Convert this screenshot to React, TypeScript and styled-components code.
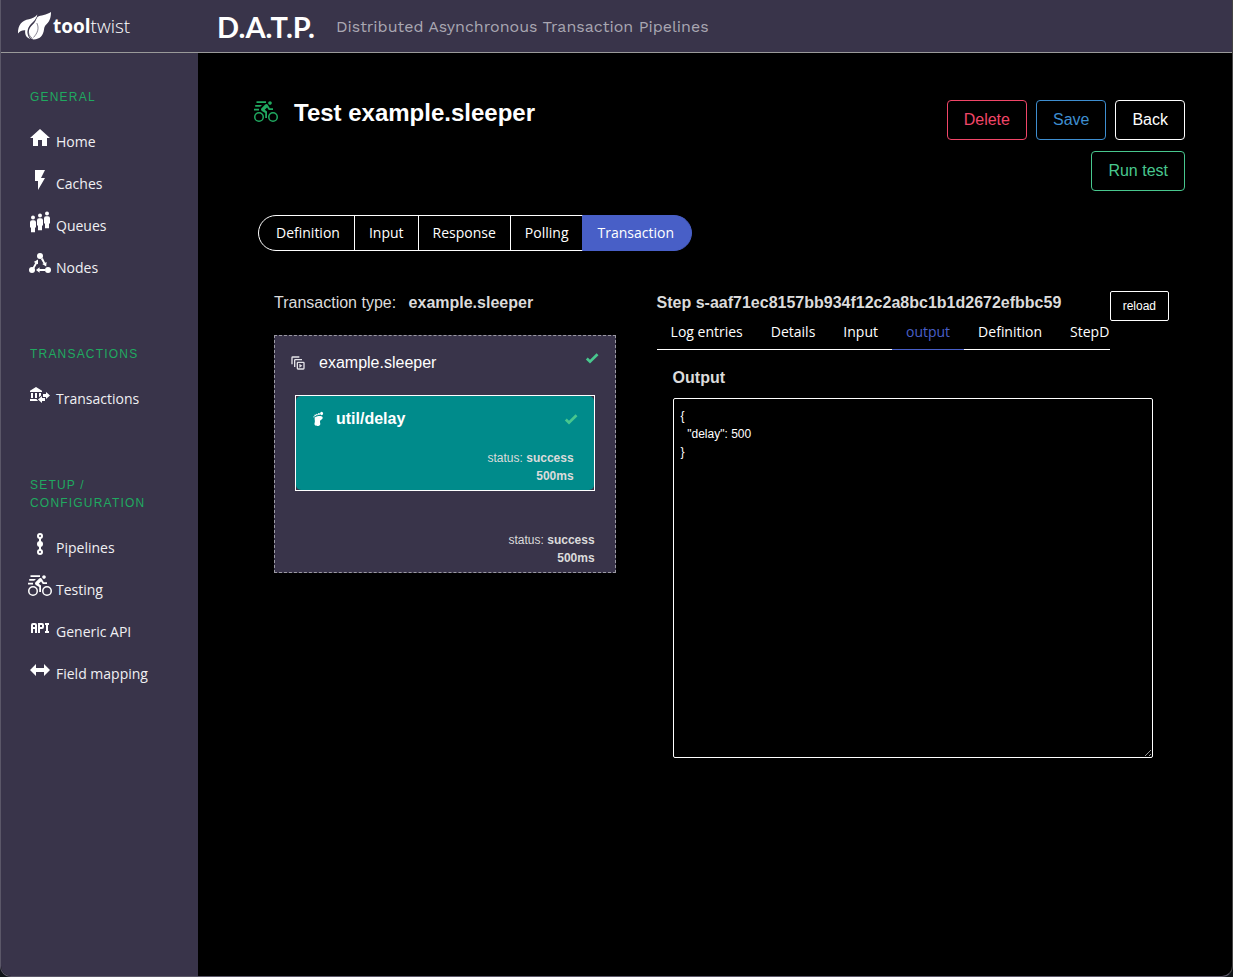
import React from "react";
import styled, { createGlobalStyle, css } from "styled-components";

const sans = `"Liberation Sans", Arial, sans-serif`;
const open = `"Open Sans", "Noto Sans", sans-serif`;
const plum = "#39344a";

const GlobalStyle = createGlobalStyle`
  *, *::before, *::after { box-sizing: border-box; }
  body { margin: 0; background: #101418; color: #dbdbdb; font: 16px/24px ${sans}; }
  h1, h2, h3, p, ul { margin: 0; padding: 0; }
  ul { list-style: none; }
  a { color: inherit; text-decoration: none; }
  button { font-family: inherit; cursor: pointer; }
`;

const Shell = styled.div`
  display: flex;
  flex-direction: column;
  min-height: 100vh;
  overflow: hidden;
  background: #000;
  border: 1px solid #5b5768;
  border-top: 0;
  border-right-color: #444;
  border-radius: 0 0 11px 11px;
`;

const Header = styled.header`
  display: flex;
  align-items: center;
  height: 53px;
  background: ${plum};
  border-bottom: 1px solid #9a9a9a;
`;

const Brand = styled.a`
  display: flex;
  align-items: center;
  gap: 1px;
  flex: 0 0 216px;
  padding-left: 16px;
  color: #fff;
  font: 300 19px/24px ${open};
  b { font-weight: 700; }
`;

const Naming = styled.div`
  display: flex;
  align-items: center;
  gap: 21px;
  padding-top: 2px;
`;

const Product = styled.h1`
  color: #fff;
  font: 700 29px/40px Lato, sans-serif;
`;

const Tagline = styled.p`
  color: #a9a7b2;
  font: 400 16px/24px "Work Sans", ${open};
`;

const Body = styled.div`
  display: flex;
  flex: 1;
`;

const Sidebar = styled.nav`
  display: flex;
  flex-direction: column;
  gap: 56px;
  flex: 0 0 197px;
  padding: 35px 29px;
  background: ${plum};
`;

const GroupTitle = styled.h2`
  margin-bottom: 15px;
  color: #20a960;
  font: 400 12px/18px ${sans};
  letter-spacing: 0.1em;
  text-transform: uppercase;
`;

const NavLink = styled.a`
  display: flex;
  align-items: center;
  gap: 4px;
  height: 42px;
  margin-left: -2px;
  color: #f0f0f3;
  font: 14px/42px ${open};
  white-space: nowrap;
  svg { flex: none; box-sizing: content-box; padding-bottom: 8px; color: #fff; }
`;

const Main = styled.main`
  flex: 1;
  min-width: 0;
  padding: 47px 47px 48px 56px;
`;

const TitleRow = styled.div`
  display: flex;
  justify-content: space-between;
  align-items: flex-start;
`;

const Title = styled.h2`
  display: flex;
  align-items: center;
  gap: 16px;
  color: #fff;
  font: 700 24px/26px ${sans};
  svg { box-sizing: content-box; padding-bottom: 2px; color: #20a960; }
`;

const Actions = styled.div`
  display: flex;
  flex-wrap: wrap;
  justify-content: flex-end;
  gap: 11px 9px;
  max-width: 256px;
`;

const Action = styled.button<{ $tone: string }>`
  height: 40px;
  padding: 0 16px;
  color: ${(p) => p.$tone};
  background: transparent;
  border: 1px solid ${(p) => p.$tone};
  border-radius: 4px;
  font-size: 16px;
  line-height: 24px;
`;

const Pills = styled.div`
  display: flex;
  margin: 24px 0 40px 4px;
`;

const Pill = styled.button<{ $active?: boolean }>`
  height: 36px;
  margin-right: -1px;
  padding: 0 14px 2px;
  color: #fff;
  background: transparent;
  border: 1px solid #fff;
  && { font: 14px/21px ${open}; }
  &:first-child { padding-left: 17px; border-radius: 18px 0 0 18px; }
  &:last-child { padding-right: 17px; border-radius: 0 18px 18px 0; }
  ${(p) => p.$active && css`
    position: relative;
    background: #485fc7;
    border-color: #485fc7;
  `}
`;

const Columns = styled.div`
  display: grid;
  grid-template-columns: minmax(0, 2fr) minmax(0, 3fr);
  gap: 41px;
  align-items: start;
  padding: 0 16px 0 20px;
`;

const TypeLine = styled.p`
  margin-bottom: 20px;
  b { margin-left: 8px; }
`;

const Pipeline = styled.section`
  padding: 14px 20px 5px;
  background: ${plum};
  border: 1px dashed #9b99a3;
`;

const StepHead = styled.div`
  display: flex;
  align-items: center;
  color: #fff;
`;

const Check = styled.svg`
  width: 16px;
  height: 16px;
  color: #48c78e;
`;

const PipelineHead = styled(StepHead)`
  gap: 13px;
  margin: 0 -5px 19px;
  > svg:first-child { color: #e4e3e8; }
  ${Check} { align-self: flex-start; }
`;

const StepName = styled.h3<{ $strong?: boolean }>`
  flex: 1;
  font: ${(p) => (p.$strong ? 700 : 400)} 16px/26px ${sans};
`;

const Status = styled.p`
  font-size: 12px;
  line-height: 18px;
  text-align: right;
`;

const StepFrame = styled.div`
  margin-bottom: 40px;
  border: 1px solid #fff;
`;

const StepCard = styled.div`
  padding: 10px 20px 5px 14px;
  background: #008b8b;
  border-radius: 5px;
  ${StepHead} { gap: 10px; margin: 0 -5px 17px 0; }
`;

const DetailHead = styled.div`
  display: flex;
  align-items: flex-start;
`;

const DetailNav = styled.div`
  flex: 1;
  min-width: 0;
`;

const DetailTitle = styled.h3`
  font: 700 16px/24px ${sans};
  white-space: nowrap;
`;

const Tabs = styled.div`
  display: flex;
  overflow: hidden;
`;

const Tab = styled.button<{ $active?: boolean }>`
  flex: 1 0 auto;
  height: 35px;
  padding: 0 14px 2px;
  text-align: left;
  color: ${(p) => (p.$active ? "#485fc7" : "#fff")};
  background: transparent;
  border: 0;
  border-bottom: 1px solid ${(p) => (p.$active ? "#485fc7" : "#fff")};
  && { font: 14px/21px ${open}; }
`;

const Reload = styled.button`
  flex: none;
  height: 30px;
  padding: 0 12px;
  color: #fff;
  background: transparent;
  border: 1px solid #fff;
  border-radius: 2px;
  font-size: 12px;
`;

const Output = styled.div`
  padding: 16px;
`;

const OutputLabel = styled.label`
  display: block;
  margin-bottom: 8px;
  font: 700 16px/24px ${sans};
`;

const OutputText = styled.textarea`
  display: block;
  width: 100%;
  height: 360px;
  padding: 8px 7px;
  color: #fff;
  background: #000;
  border: 1px solid #fff;
  border-radius: 2px;
  font: 12px/18px ${sans};
  resize: both;
`;

const Glyph = ({ d, size = 24, children }: { d?: string; size?: number; children?: React.ReactNode }) => (
  <svg width={size} height={size} viewBox="0 0 24 24" fill="currentColor" aria-hidden="true">
    {d && <path fillRule="evenodd" d={d} />}
    {children}
  </svg>
);

const BIKE =
  "M5 20.5A3.5 3.5 0 0 1 1.5 17A3.5 3.5 0 0 1 5 13.5A3.5 3.5 0 0 1 8.5 17A3.5 3.5 0 0 1 5 20.5M5 12A5 5 0 0 0 0 17A5 5 0 0 0 5 22A5 5 0 0 0 10 17A5 5 0 0 0 5 12M14.8 10H19V8.2H15.8L13.86 4.93C13.57 4.43 13 4.1 12.4 4.1C11.93 4.1 11.5 4.29 11.2 4.6L7.5 8.29C7.19 8.6 7 9 7 9.5C7 10.13 7.33 10.66 7.85 10.97L11.2 13V18H13V11.5L10.75 9.85L13.07 7.5M19 20.5A3.5 3.5 0 0 1 15.5 17A3.5 3.5 0 0 1 19 13.5A3.5 3.5 0 0 1 22.5 17A3.5 3.5 0 0 1 19 20.5M19 12A5 5 0 0 0 14 17A5 5 0 0 0 19 22A5 5 0 0 0 24 17A5 5 0 0 0 19 12M16 4.8C17 4.8 17.8 4 17.8 3C17.8 2 17 1.2 16 1.2C15 1.2 14.2 2 14.2 3C14.2 4 15 4.8 16 4.8ZM2.5 1.2H12V3H2.5ZM1.2 5H8L6.2 6.8H1.2ZM0 8.8H5V10.6H0Z";

const CHECK = "M9 20.42L2.79 14.21L5.62 11.38L9 14.77L18.88 4.88L21.71 7.71L9 20.42Z";

const PERSON = "M-3 4.600A2 2 0 0 1-1 2.600H1A2 2 0 0 1 3 4.600V9.800H2V14.600H-2V9.800H-3Z";

const icons = {
  home: <Glyph d="M10 20V14H14V20H19V12H22L12 3L2 12H5V20H10Z" />,
  flash: <Glyph d="M7 2V13H10V22L17 10H13L17 2H7Z" />,
  queue: (
    <Glyph>
      {[[5, 7.6], [12, 5.6], [19, 3.6]].map(([x, y]) => (
        <g key={x} transform={`translate(${x} ${y})`}>
          <circle r="2" />
          <path d={PERSON} />
        </g>
      ))}
    </Glyph>
  ),
  nodes: (
    <Glyph>
      <circle cx="12" cy="4" r="3" />
      <circle cx="4" cy="18" r="3" />
      <circle cx="20" cy="18" r="3" />
      <path d="M4.500 15.800L7.300 10.800L5.700 9.900L10 7.400V12.300L8.900 11.700L6.300 16.600ZM12.900 7L14.900 6L17.100 10.700L18.600 10L18.200 14.600L14.200 12.100L15.500 11.500ZM17 17V19.100H11.600V20.800L8 18L11.600 15.300V17Z" />
    </Glyph>
  ),
  transfer: (
    <Glyph d="M15 14V11H18V9L22 12.5L18 16V14H15M14 7.7V9H2V7.7L8 4L14 7.7M7 10H9V15H7V10M3 10H5V15H3V10M13 10V12.5L11 14.3V10H13M9.1 16L8.5 16.5L10.2 18H2V16H9.1M17 15V18H14V20L10 16.5L14 13V15H17Z" />
  ),
  pipeline: (
    <Glyph>
      <g fill="none" stroke="currentColor" strokeWidth="2">
        <circle cx="12" cy="4" r="2" />
        <circle cx="12" cy="20" r="2" />
        <path d="M12 6V18" />
      </g>
      <circle cx="12" cy="12" r="3" />
    </Glyph>
  ),
  bike: <Glyph d={BIKE} />,
  api: (
    <Glyph d="M7 7H5A2 2 0 0 0 3 9V17H5V13H7V17H9V9A2 2 0 0 0 7 7M7 11H5V9H7M14 7H10V17H12V13H14A2 2 0 0 0 16 11V9A2 2 0 0 0 14 7M14 11H12V9H14M20 9V15H21V17H17V15H18V9H17V7H21V9Z" />
  ),
  arrows: <Glyph d="M8 14V18L2 12L8 6V10H16V6L22 12L16 18V14H8Z" />,
  stack: (
    <Glyph
      size={16}
      d="M4 2A2 2 0 0 0 2 4V14H4V4H14V2ZM8 6A2 2 0 0 0 6 8V18H8V8H18V6ZM12 10A2 2 0 0 0 10 12V20A2 2 0 0 0 12 22H20A2 2 0 0 0 22 20V12A2 2 0 0 0 20 10ZM12 12H20V20H12ZM14 13V19L18.5 16Z"
    />
  ),
  foot: (
    <Glyph size={16}>
      <path d="M7.500 9.500C9.500 7.500 12.500 7.600 15 7.400C18 7.200 19.500 9 19 11C18.400 13.200 15.400 13 15 15.200C14.700 17.200 16 18.800 15.200 20.600C14 23.200 8.500 23.200 7 20.800C6 18.600 7.600 17.500 7.300 15C7.100 12.800 6.500 11 7.500 9.500Z" />
      <ellipse cx="17.4" cy="3.8" rx="2.2" ry="2.6" />
      <circle cx="13.4" cy="4.4" r="1.500" />
      <circle cx="10.4" cy="5.300" r="1.300" />
      <circle cx="7.800" cy="6.600" r="1.200" />
      <circle cx="6" cy="8.800" r="1.100" />
    </Glyph>
  ),
};

const Logo = () => (
  <svg width="35" height="30" viewBox="0 0 35 30" aria-hidden="true">
    <path fill="#fff" d="M1 22.5C.8 14 5 9 12 8.2C15.4 7.6 18.4 6.200 20.300 3.600C20 7 18.500 9.200 15.800 11.400C12 14.500 9.600 19 10.800 23.500C11.400 25.500 12.400 27 13.600 28C9.500 27.200 7.600 23.600 8.200 19.300C5.400 19 3 20.200 1 22.500Z" />
    <path fill="#fff" d="M34 1C34 6 33 10 29.500 13.200C28 14.500 27.300 16 27 18.500C26.300 24 23.500 28.300 16.500 28.400C12.600 27.500 11.200 23.500 11.800 20C12.400 16.500 15 14.200 17.200 12C18.800 10.400 19 7.500 20.500 6C23.500 4 29.500 4.200 34 1Z" />
    <path fill="none" stroke="#39344a" strokeWidth="0.600" d="M19.500 6.500C19 10 12.800 12.600 11.500 18.500C10.900 22 12.300 25.500 15.500 27.500M19.800 12C22.500 17.500 20.500 22 16.500 26.500" />
  </svg>
);

type Item = { label: string; icon: keyof typeof icons };
const groups: { title: string; items: Item[] }[] = [
  {
    title: "General",
    items: [
      { label: "Home", icon: "home" },
      { label: "Caches", icon: "flash" },
      { label: "Queues", icon: "queue" },
      { label: "Nodes", icon: "nodes" },
    ],
  },
  { title: "Transactions", items: [{ label: "Transactions", icon: "transfer" }] },
  {
    title: "Setup / Configuration",
    items: [
      { label: "Pipelines", icon: "pipeline" },
      { label: "Testing", icon: "bike" },
      { label: "Generic API", icon: "api" },
      { label: "Field mapping", icon: "arrows" },
    ],
  },
];

const StatusLines = () => (
  <Status>
    status: <b>success</b>
    <br />
    <b>500ms</b>
  </Status>
);

const Done = () => (
  <Check viewBox="0 0 24 24" fill="currentColor" role="img" aria-label="done">
    <path d={CHECK} />
  </Check>
);

export default function App() {
  return (
    <>
      <GlobalStyle />
      <Shell>
        <Header>
          <Brand href="#">
            <Logo />
            <span><b>tool</b>twist</span>
          </Brand>
          <Naming>
            <Product>D.A.T.P.</Product>
            <Tagline>Distributed Asynchronous Transaction Pipelines</Tagline>
          </Naming>
        </Header>
        <Body>
          <Sidebar>
            {groups.map((g) => (
              <div key={g.title}>
                <GroupTitle>{g.title}</GroupTitle>
                <ul>
                  {g.items.map((i) => (
                    <li key={i.label}>
                      <NavLink href="#">
                        {icons[i.icon]}
                        {i.label}
                      </NavLink>
                    </li>
                  ))}
                </ul>
              </div>
            ))}
          </Sidebar>
          <Main>
            <TitleRow>
              <Title>
                {icons.bike}
                Test example.sleeper
              </Title>
              <Actions>
                <Action $tone="#f14668">Delete</Action>
                <Action $tone="#3e8ed0">Save</Action>
                <Action $tone="#ffffff">Back</Action>
                <Action $tone="#48c78e">Run test</Action>
              </Actions>
            </TitleRow>
            <Pills>
              {["Definition", "Input", "Response", "Polling", "Transaction"].map((t) => (
                <Pill key={t} $active={t === "Transaction"}>{t}</Pill>
              ))}
            </Pills>
            <Columns>
              <div>
                <TypeLine>
                  Transaction type: <b>example.sleeper</b>
                </TypeLine>
                <Pipeline>
                  <PipelineHead>
                    {icons.stack}
                    <StepName>example.sleeper</StepName>
                    <Done />
                  </PipelineHead>
                  <StepFrame>
                    <StepCard>
                      <StepHead>
                        {icons.foot}
                        <StepName $strong>util/delay</StepName>
                        <Done />
                      </StepHead>
                      <StatusLines />
                    </StepCard>
                  </StepFrame>
                  <StatusLines />
                </Pipeline>
              </div>
              <div>
                <DetailHead>
                  <DetailNav>
                    <DetailTitle>Step s-aaf71ec8157bb934f12c2a8bc1b1d2672efbbc59</DetailTitle>
                    <Tabs>
                      {["Log entries", "Details", "Input", "output", "Definition", "StepD"].map((t) => (
                        <Tab key={t} $active={t === "output"}>{t}</Tab>
                      ))}
                    </Tabs>
                  </DetailNav>
                  <Reload>reload</Reload>
                </DetailHead>
                <Output>
                  <OutputLabel htmlFor="output">Output</OutputLabel>
                  <OutputText id="output" readOnly defaultValue={'{\n  "delay": 500\n}'} />
                </Output>
              </div>
            </Columns>
          </Main>
        </Body>
      </Shell>
    </>
  );
}
